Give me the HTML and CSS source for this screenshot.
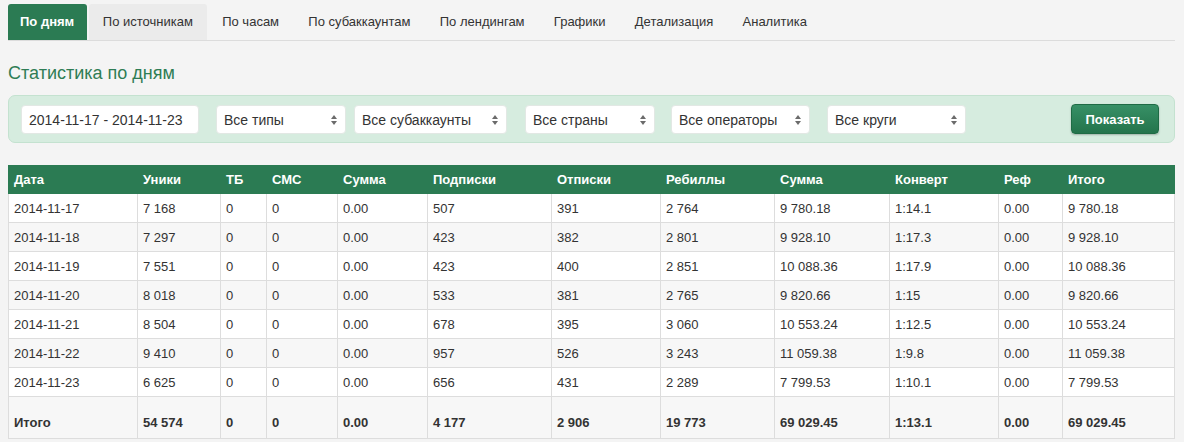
FILE: index.html
```html
<!DOCTYPE html>
<html lang="ru">
<head>
<meta charset="utf-8">
<title>Статистика по дням</title>
<link rel="stylesheet" href="styles.css">
</head>
<body>
<div class="page">
  <ul class="tabs">
    <li class="tab active">По дням</li>
    <li class="tab hover">По источникам</li>
    <li class="tab">По часам</li>
    <li class="tab">По субаккаунтам</li>
    <li class="tab">По лендингам</li>
    <li class="tab">Графики</li>
    <li class="tab">Детализация</li>
    <li class="tab">Аналитика</li>
  </ul>

  <h2 class="title">Статистика по дням</h2>

  <form class="filters">
    <div class="field date">2014-11-17 - 2014-11-23</div>
    <div class="field select w-types">Все типы<span class="arrows"></span></div>
    <div class="field select w-sub">Все субаккаунты<span class="arrows"></span></div>
    <div class="field select w-countries">Все страны<span class="arrows"></span></div>
    <div class="field select w-ops">Все операторы<span class="arrows"></span></div>
    <div class="field select w-circles">Все круги<span class="arrows"></span></div>
    <button type="button" class="btn">Показать</button>
  </form>

  <table class="stats">
    <colgroup>
      <col style="width:129px"><col style="width:83px"><col style="width:46px"><col style="width:71px">
      <col style="width:90px"><col style="width:124px"><col style="width:109px"><col style="width:114px">
      <col style="width:115px"><col style="width:109px"><col style="width:64px"><col>
    </colgroup>
    <thead>
      <tr><th>Дата</th><th>Уники</th><th>ТБ</th><th>СМС</th><th>Сумма</th><th>Подписки</th><th>Отписки</th><th>Ребиллы</th><th>Сумма</th><th>Конверт</th><th>Реф</th><th>Итого</th></tr>
    </thead>
    <tbody>
      <tr><td>2014-11-17</td><td>7 168</td><td>0</td><td>0</td><td>0.00</td><td>507</td><td>391</td><td>2 764</td><td>9 780.18</td><td>1:14.1</td><td>0.00</td><td>9 780.18</td></tr>
      <tr><td>2014-11-18</td><td>7 297</td><td>0</td><td>0</td><td>0.00</td><td>423</td><td>382</td><td>2 801</td><td>9 928.10</td><td>1:17.3</td><td>0.00</td><td>9 928.10</td></tr>
      <tr><td>2014-11-19</td><td>7 551</td><td>0</td><td>0</td><td>0.00</td><td>423</td><td>400</td><td>2 851</td><td>10 088.36</td><td>1:17.9</td><td>0.00</td><td>10 088.36</td></tr>
      <tr><td>2014-11-20</td><td>8 018</td><td>0</td><td>0</td><td>0.00</td><td>533</td><td>381</td><td>2 765</td><td>9 820.66</td><td>1:15</td><td>0.00</td><td>9 820.66</td></tr>
      <tr><td>2014-11-21</td><td>8 504</td><td>0</td><td>0</td><td>0.00</td><td>678</td><td>395</td><td>3 060</td><td>10 553.24</td><td>1:12.5</td><td>0.00</td><td>10 553.24</td></tr>
      <tr><td>2014-11-22</td><td>9 410</td><td>0</td><td>0</td><td>0.00</td><td>957</td><td>526</td><td>3 243</td><td>11 059.38</td><td>1:9.8</td><td>0.00</td><td>11 059.38</td></tr>
      <tr><td>2014-11-23</td><td>6 625</td><td>0</td><td>0</td><td>0.00</td><td>656</td><td>431</td><td>2 289</td><td>7 799.53</td><td>1:10.1</td><td>0.00</td><td>7 799.53</td></tr>
    </tbody>
    <tfoot>
      <tr><td>Итого</td><td>54 574</td><td>0</td><td>0</td><td>0.00</td><td>4 177</td><td>2 906</td><td>19 773</td><td>69 029.45</td><td>1:13.1</td><td>0.00</td><td>69 029.45</td></tr>
    </tfoot>
  </table>
</div>
</body>
</html>
```

FILE: styles.css
```css
html, body {
  margin: 0;
  background: #f4f4f4;
}

body {
  font-family: "Liberation Sans", Arial, sans-serif;
  font-size: 13px;
  color: #333;
}

.page {
  padding: 4px 9px 0 8px;
}

/* tab strip */
.tabs {
  display: flex;
  margin: 0;
  padding: 0;
  list-style: none;
  border-bottom: 1px solid #dcdcdc;
}

.tab {
  height: 36px;
  line-height: 36px;
  padding: 0 13.65px;
  margin-right: 2px;
  color: #333;
  border-radius: 3px 3px 0 0;
}

.tab.active {
  background: #2b7b53;
  color: #fff;
  font-weight: bold;
  padding: 0 13px 0 12px;
}

.tab.hover {
  background: #ebebeb;
}

.title {
  margin: 22px 0 0;
  font-size: 18px;
  font-weight: normal;
  color: #2f7d55;
  line-height: 20px;
}

/* filter panel */
.filters {
  display: flex;
  align-items: center;
  margin-top: 12px;
  height: 46px;
  padding: 0 15px 0 12px;
  background: #d6ecdf;
  border: 1px solid #c4e2d0;
  border-radius: 7px;
}

.field {
  position: relative;
  height: 29px;
  line-height: 28px;
  box-sizing: border-box;
  padding: 0 7px;
  background: #fff;
  border: 1px solid #e2e8e4;
  border-radius: 4px;
  color: #333;
  font-size: 14px;
}

.field.date { width: 178px; margin-right: 17px; }
.w-types { width: 130px; margin-right: 8px; }
.w-sub { width: 153px; margin-right: 18px; }
.w-countries { width: 130px; margin-right: 16px; }
.w-ops { width: 139px; margin-right: 17px; }
.w-circles { width: 139px; }

.arrows {
  position: absolute;
  right: 8px;
  top: 9px;
  width: 0;
  height: 0;
  border-left: 3px solid transparent;
  border-right: 3px solid transparent;
  border-bottom: 4px solid #6b6b6b;
}

.arrows::after {
  content: "";
  position: absolute;
  left: -3px;
  top: 6px;
  border-left: 3px solid transparent;
  border-right: 3px solid transparent;
  border-top: 4px solid #6b6b6b;
}

.btn {
  margin-left: auto;
  width: 88px;
  height: 30px;
  border: 1px solid #1f6b45;
  border-radius: 4px;
  background: linear-gradient(#379066, #24744c);
  color: #fff;
  font-family: "Liberation Sans", Arial, sans-serif;
  font-size: 13px;
  font-weight: bold;
  box-shadow: 0 1px 2px rgba(0, 0, 0, 0.25);
}

/* statistics table */
.stats {
  margin-top: 22px;
  width: 100%;
  border-collapse: collapse;
  table-layout: fixed;
}

.stats th,
.stats td {
  text-align: left;
  padding: 0 5px;
  border: 1px solid #dddddd;
  white-space: nowrap;
}

.stats th {
  height: 27px;
  background: #2b7b53;
  color: #fff;
  font-weight: bold;
  border-color: #2b7b53;
  border-left-color: #e6ede9;
}

.stats th:first-child {
  border-left-color: #2b7b53;
}

.stats tbody td {
  height: 28px;
  background: #fff;
}

.stats tbody tr:nth-child(even) td {
  background: #f7f7f7;
}

.stats tfoot td {
  height: 42px;
  padding-top: 10px;
  box-sizing: border-box;
  font-weight: bold;
  background: #f7f7f7;
}
```
